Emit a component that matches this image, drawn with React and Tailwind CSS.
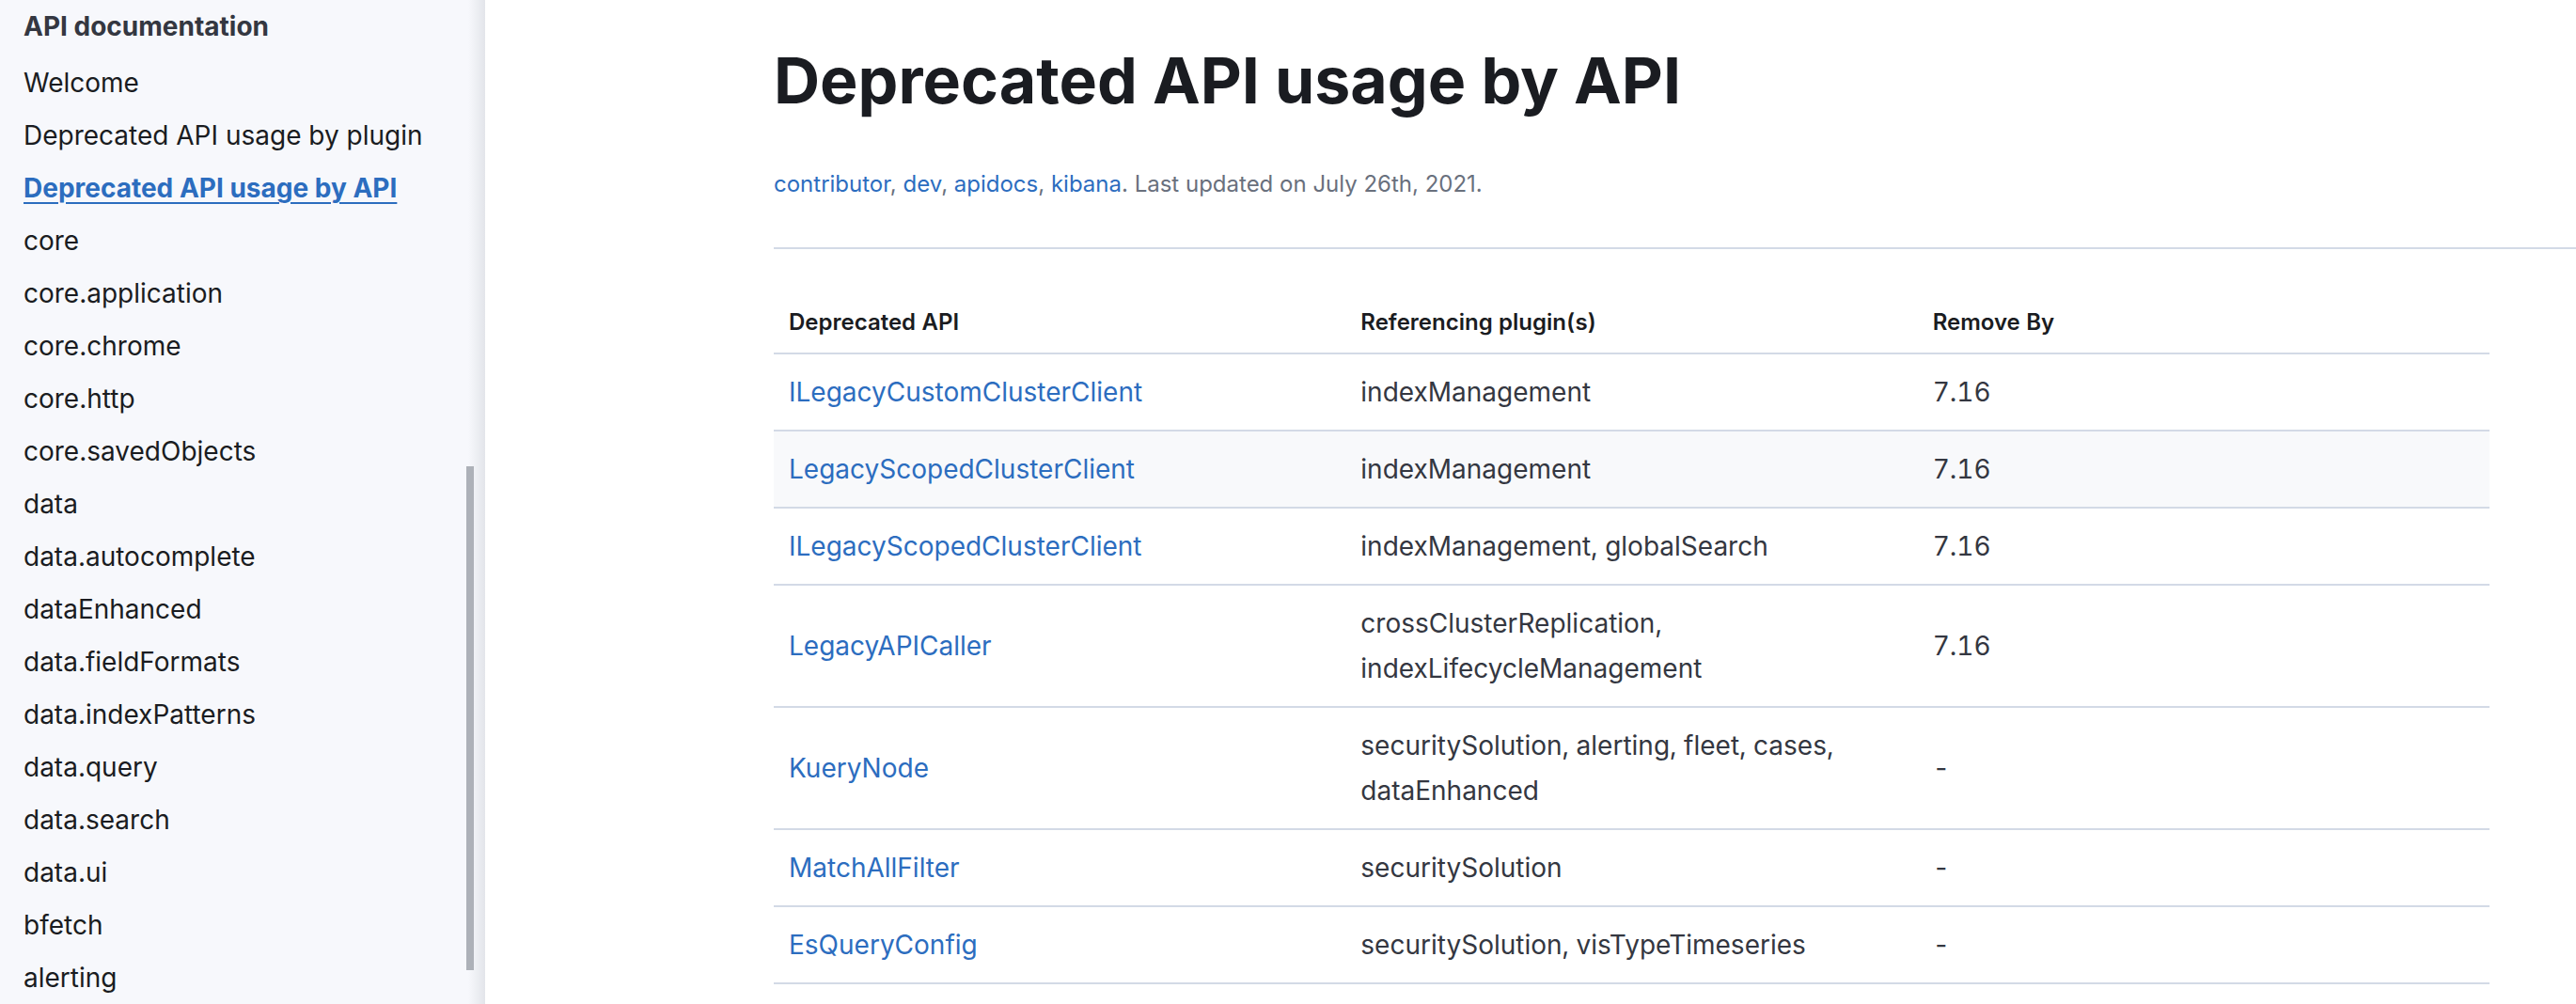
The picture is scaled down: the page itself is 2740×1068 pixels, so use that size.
import React from "react";

const navItems = [
  "Welcome",
  "Deprecated API usage by plugin",
  "Deprecated API usage by API",
  "core",
  "core.application",
  "core.chrome",
  "core.http",
  "core.savedObjects",
  "data",
  "data.autocomplete",
  "dataEnhanced",
  "data.fieldFormats",
  "data.indexPatterns",
  "data.query",
  "data.search",
  "data.ui",
  "bfetch",
  "alerting",
];

const rows = [
  { api: "ILegacyCustomClusterClient", plugins: ["indexManagement"], by: "7.16" },
  { api: "LegacyScopedClusterClient", plugins: ["indexManagement"], by: "7.16", striped: true },
  { api: "ILegacyScopedClusterClient", plugins: ["indexManagement, globalSearch"], by: "7.16" },
  { api: "LegacyAPICaller", plugins: ["crossClusterReplication,", "indexLifecycleManagement"], by: "7.16" },
  { api: "KueryNode", plugins: ["securitySolution, alerting, fleet, cases,", "dataEnhanced"], by: "-" },
  { api: "MatchAllFilter", plugins: ["securitySolution"], by: "-" },
  { api: "EsQueryConfig", plugins: ["securitySolution, visTypeTimeseries"], by: "-" },
];

export default function App() {
  return (
    <div
      className="flex h-[1068px] w-[2740px] overflow-hidden bg-white text-[#1a1c21]"
      style={{ fontFamily: "Inter, 'Noto Sans', sans-serif" }}
    >
      {/* Sidebar */}
      <aside className="relative w-[516px] shrink-0 bg-[#f7f8fc]">
        <div className="pl-[25px] pt-[4px]">
          <div className="h-[48px] text-[28px] font-bold leading-[48px] text-[#343741]">
            API documentation
          </div>
          <ul className="mt-[8px]">
            {navItems.map((item) => {
              const active = item === "Deprecated API usage by API";
              return (
                <li
                  key={item}
                  className={
                    active
                      ? "h-[56px] text-[28px] font-bold leading-[56px] text-[#2c6dbf] underline decoration-[2px] underline-offset-[5px]"
                      : "h-[56px] text-[28px] leading-[56px] text-[#1a1c21]"
                  }
                >
                  {item}
                </li>
              );
            })}
          </ul>
        </div>
        <div className="absolute right-0 top-0 h-full w-[18px] bg-gradient-to-r from-[#f7f8fc00] to-[#e3e5ea]" />
        <div className="absolute left-[496px] top-[496px] h-[536px] w-[8px] bg-[#adb1b8]" />
      </aside>

      {/* Main */}
      <main className="flex-1 pl-[307px]">
        <h1 className="mt-[45px] text-[68px] font-bold leading-[80px] text-[#1a1c21]">
          Deprecated API usage by API
        </h1>
        <p className="mt-[47px] text-[24px] leading-[48px] text-[#69707d]">
          <span className="text-[#2c6dbf]">contributor</span>,{" "}
          <span className="text-[#2c6dbf]">dev</span>,{" "}
          <span className="text-[#2c6dbf]">apidocs</span>,{" "}
          <span className="text-[#2c6dbf]">kibana</span>. Last updated on July 26th, 2021.
        </p>
        <div className="mt-[43px] h-[2px] w-full bg-[#d3dae6]" />

        <table className="mt-[46px] w-[1825px] table-fixed border-collapse tabular-nums">
          <thead>
            <tr className="border-b-2 border-[#d3dae6]">
              <th className="w-1/3 px-[16px] py-[16px] text-left text-[24px] font-semibold leading-[32px] text-[#1a1c21]">
                Deprecated API
              </th>
              <th className="w-1/3 px-[16px] py-[16px] text-left text-[24px] font-semibold leading-[32px] text-[#1a1c21]">
                Referencing plugin(s)
              </th>
              <th className="w-1/3 px-[16px] py-[16px] text-left text-[24px] font-semibold leading-[32px] text-[#1a1c21]">
                Remove By
              </th>
            </tr>
          </thead>
          <tbody>
            {rows.map((r) => (
              <tr
                key={r.api}
                className={
                  r.striped
                    ? "border-b-2 border-[#d3dae6] bg-[#f8f9fb]"
                    : "border-b-2 border-[#d3dae6] bg-white"
                }
              >
                <td className="px-[16px] py-[16px] align-middle text-[28px] leading-[48px] text-[#2c6dbf]">
                  {r.api}
                </td>
                <td className="px-[16px] py-[16px] align-middle text-[28px] leading-[48px] text-[#343741]">
                  {r.plugins.map((p, i) => (
                    <React.Fragment key={i}>
                      {i > 0 && <br />}
                      {p}
                    </React.Fragment>
                  ))}
                </td>
                <td className="px-[16px] py-[16px] align-middle text-[28px] leading-[48px] text-[#343741]">
                  {r.by}
                </td>
              </tr>
            ))}
          </tbody>
        </table>
      </main>
    </div>
  );
}
